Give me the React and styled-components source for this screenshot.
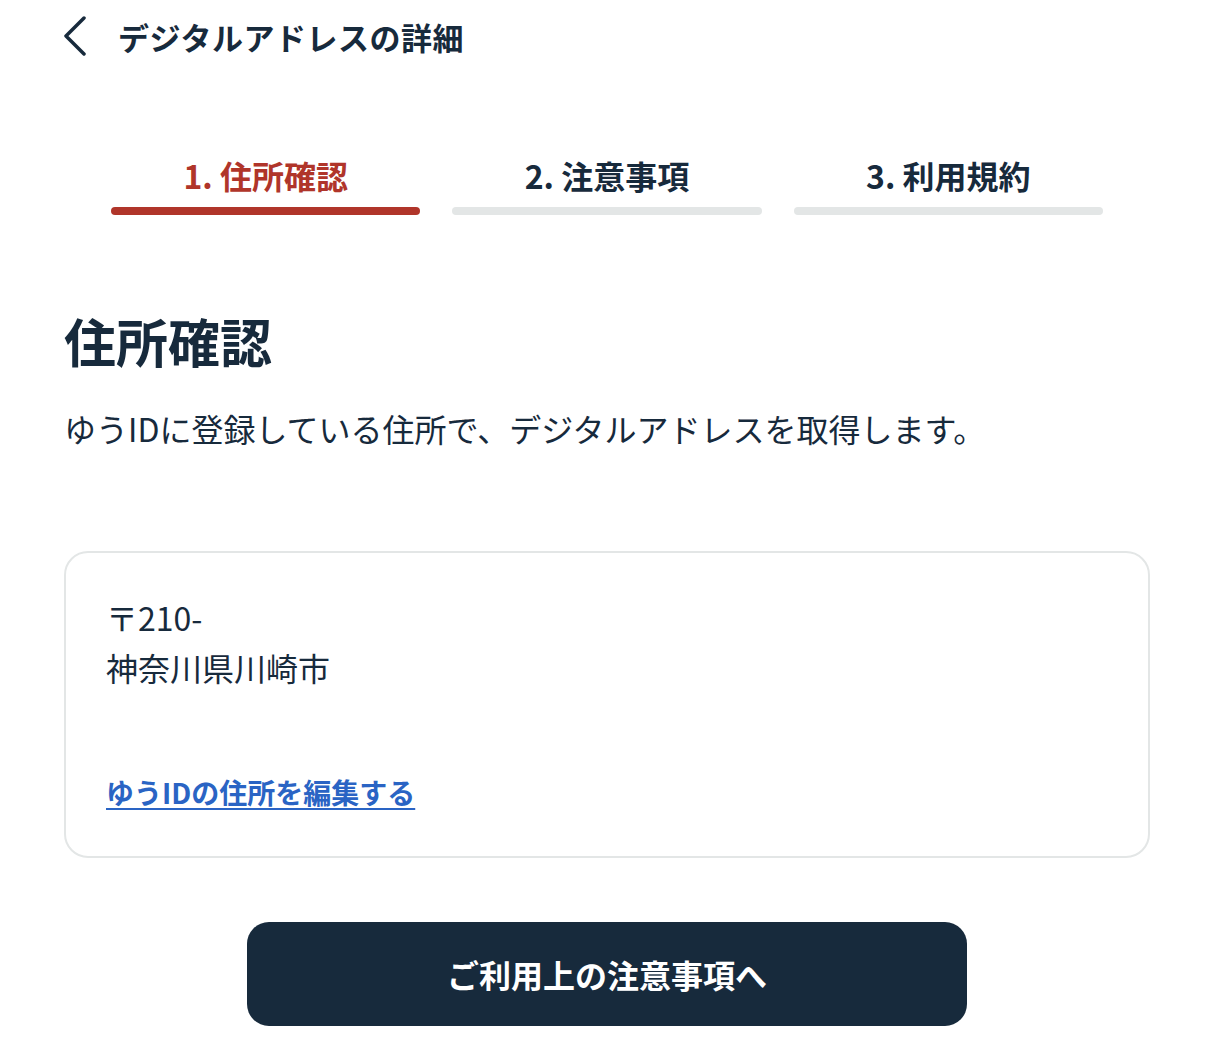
import React from "react"
import styled, { createGlobalStyle } from "styled-components"

const GlobalStyle = createGlobalStyle`
  body {
    margin: 0;
    background: #fff;
    font-family: "Noto Sans CJK JP", "Noto Sans", sans-serif;
    color: #172a3c;
  }
`

const Page = styled.div`
  width: 1086px;
  padding: 0 74px 0 64px;
`

const Header = styled.header`
  display: flex;
  align-items: center;
  height: 72px;
  gap: 28px;
`

const BackButton = styled.button`
  border: 0;
  background: none;
  padding: 0;
  margin-left: -4px;
  display: flex;
  color: #172a3c;
  cursor: pointer;
`

const Title = styled.h1`
  margin: 0;
  font-size: 31px;
  font-weight: 700;
  letter-spacing: 0.5px;
`

const Steps = styled.nav`
  display: grid;
  grid-template-columns: repeat(3, 1fr);
  gap: 32px;
  margin: 83px 47px 0;
`

const Step = styled.div`
  display: flex;
  flex-direction: column;
  align-items: center;
  gap: 12px;
  font-size: 32px;
  line-height: 40px;
  font-weight: 700;
  color: ${p => (p.$active ? "#b0352a" : "#172a3c")};

  &::after {
    content: "";
    display: block;
    width: 100%;
    height: 8px;
    border-radius: 4px;
    background: ${p => (p.$active ? "#b0352a" : "#e3e6e6")};
  }
`

const Heading = styled.h2`
  margin: 90px 0 0;
  font-size: 52px;
  line-height: 72px;
  font-weight: 700;
`

const Lead = styled.p`
  margin: 29px 0 0;
  font-size: 32px;
  line-height: 44px;
`

const Card = styled.section`
  margin-top: 101px;
  border: 2px solid #e3e6e6;
  border-radius: 24px;
  padding: 39px 40px 44px;
`

const Address = styled.p`
  margin: 0;
  font-size: 32px;
  line-height: 50px;
`

const EditLink = styled.a`
  display: inline-block;
  margin-top: 80px;
  font-size: 28px;
  font-weight: 700;
  color: #2a64c4;
  text-decoration: underline;
  text-underline-offset: 4px;
`

const Primary = styled.button`
  display: block;
  width: 720px;
  height: 104px;
  margin: 64px auto 0;
  border: 0;
  border-radius: 22px;
  background: #172a3c;
  color: #fff;
  font-family: inherit;
  font-size: 32px;
  font-weight: 700;
  cursor: pointer;
`

const Chevron = () => (
  <svg width="30" height="40" viewBox="0 0 30 40" fill="none">
    <path d="M24 2 L6 20 L24 38" stroke="currentColor" strokeWidth="3.5" strokeLinecap="round" strokeLinejoin="round" />
  </svg>
)

const steps = ["1. 住所確認", "2. 注意事項", "3. 利用規約"]

export default function App() {
  return (
    <>
      <GlobalStyle />
      <Page>
        <Header>
          <BackButton aria-label="戻る">
            <Chevron />
          </BackButton>
          <Title>デジタルアドレスの詳細</Title>
        </Header>
        <Steps>
          {steps.map((s, i) => (
            <Step key={s} $active={i === 0}>{s}</Step>
          ))}
        </Steps>
        <Heading>住所確認</Heading>
        <Lead>ゆうIDに登録している住所で、デジタルアドレスを取得します。</Lead>
        <Card>
          <Address>〒210-</Address>
          <Address>神奈川県川崎市</Address>
          <EditLink href="#">ゆうIDの住所を編集する</EditLink>
        </Card>
        <Primary>ご利用上の注意事項へ</Primary>
      </Page>
    </>
  )
}
